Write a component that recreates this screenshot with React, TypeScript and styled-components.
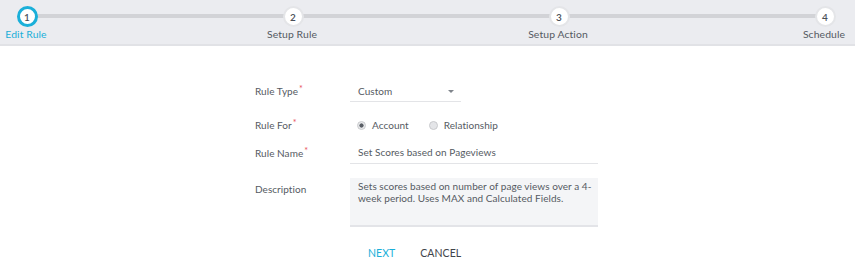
import * as React from 'react';
import styled, { createGlobalStyle } from 'styled-components';

const GlobalStyle = createGlobalStyle`
  body {
    margin: 0;
    background: #ffffff;
    font-family: Lato, "Open Sans", Arial, sans-serif;
  }
`;

const CYAN = '#1aafd9';

const steps = ['Edit Rule', 'Setup Rule', 'Setup Action', 'Schedule'];

export default () => (
  <>
    <GlobalStyle />
    <Header>
      <Track>
        {steps.map((label, i) => (
          <React.Fragment key={label}>
            {i > 0 && <Connector />}
            <Step>
              <Circle $active={i === 0}>{i + 1}</Circle>
              <StepLabel $active={i === 0}>{label}</StepLabel>
            </Step>
          </React.Fragment>
        ))}
      </Track>
    </Header>
    <Form>
      <Row $top={34}>
        <Label>
          Rule Type<Req>*</Req>
        </Label>
        <Select>
          <span>Custom</span>
          <Caret />
        </Select>
      </Row>
      <Row $top={15}>
        <Label $line={16}>
          Rule For<Req>*</Req>
        </Label>
        <Radios>
          <RadioItem>
            <RadioDot $checked />
            Account
          </RadioItem>
          <RadioItem>
            <RadioDot />
            Relationship
          </RadioItem>
        </Radios>
      </Row>
      <Row $top={9}>
        <Label>
          Rule Name<Req>*</Req>
        </Label>
        <TextField $width={248}>Set Scores based on Pageviews</TextField>
      </Row>
      <Row $top={14}>
        <Label>Description</Label>
        <TextArea>
          Sets scores based on number of page views over a 4-week period. Uses MAX and Calculated
          Fields.
        </TextArea>
      </Row>
      <Actions>
        <ActionButton $primary>NEXT</ActionButton>
        <ActionButton>CANCEL</ActionButton>
      </Actions>
    </Form>
  </>
);

const Header = styled.div`
  height: 44px;
  background: #ebecf0;
  border-bottom: 2px solid #e1e2e6;
  box-sizing: content-box;
`;

const Track = styled.div`
  display: flex;
  padding: 6px 30px 0 27px;
`;

const Step = styled.div`
  width: 0;
  display: flex;
  flex-direction: column;
  align-items: center;
`;

const Connector = styled.div`
  flex: 1;
  height: 4px;
  margin-top: 8px;
  background: #d2d3d7;
`;

const Circle = styled.div<{ $active?: boolean }>`
  position: relative;
  z-index: 1;
  flex: none;
  width: 21px;
  height: 21px;
  box-sizing: border-box;
  border-radius: 50%;
  background: #ffffff;
  border: ${p => (p.$active ? `3px solid ${CYAN}` : '2px solid #e4e5e8')};
  display: flex;
  align-items: center;
  justify-content: center;
  font-size: 10px;
  font-weight: 600;
  color: #4a4f57;
`;

const StepLabel = styled.div<{ $active?: boolean }>`
  margin-top: 1px;
  margin-left: -2px;
  white-space: nowrap;
  font-size: 10.4px;
  line-height: 13px;
  letter-spacing: 0.1px;
  color: ${p => (p.$active ? CYAN : '#555a62')};
`;

const Form = styled.div`
  width: 343px;
  margin: 0 auto;
  transform: translateX(-1px);
  color: #555a62;
  font-size: 10px;
  letter-spacing: 0.05px;
`;

const Row = styled.div<{ $top: number }>`
  display: grid;
  grid-template-columns: 95px 248px;
  align-items: start;
  margin-top: ${p => p.$top}px;
`;

const Label = styled.div<{ $line?: number }>`
  height: ${p => p.$line ?? 22}px;
  line-height: ${p => p.$line ?? 22}px;
`;

const Req = styled.span`
  color: #e8505b;
  font-size: 9px;
  line-height: 0;
  vertical-align: 3px;
  margin-left: 1px;
`;

const Select = styled.div`
  width: 111px;
  height: 22px;
  box-sizing: border-box;
  padding: 0 7px 0 8px;
  border-bottom: 1px solid #e3e4e7;
  display: flex;
  align-items: center;
  justify-content: space-between;
`;

const Caret = styled.span`
  width: 0;
  height: 0;
  border-left: 3px solid transparent;
  border-right: 3px solid transparent;
  border-top: 3px solid #80858c;
  margin-top: 2px;
`;

const Radios = styled.div`
  display: flex;
  gap: 20px;
  padding-left: 7px;
  height: 16px;
  align-items: center;
`;

const RadioItem = styled.label`
  display: flex;
  align-items: center;
  gap: 6px;
`;

const RadioDot = styled.span<{ $checked?: boolean }>`
  width: 9px;
  height: 9px;
  box-sizing: border-box;
  border-radius: 50%;
  border: 1px solid #c9cacd;
  background: ${p => (p.$checked ? 'radial-gradient(circle, #5a5f66 0 1.8px, #e8e9eb 2.4px)' : '#e4e5e8')};
`;

const TextField = styled.div<{ $width: number }>`
  width: ${p => p.$width}px;
  height: 22px;
  box-sizing: border-box;
  padding: 0 8px;
  line-height: 21px;
  border-bottom: 1px solid #e3e4e7;
`;

const TextArea = styled.div`
  width: 248px;
  height: 49px;
  box-sizing: border-box;
  padding: 2px 2px 0 8px;
  line-height: 12px;
  background: #f4f5f7;
  border-bottom: 2px solid #e3e4e8;
`;

const Actions = styled.div`
  display: flex;
  gap: 25px;
  margin-top: 16px;
  padding-left: 113px;
`;

const ActionButton = styled.div<{ $primary?: boolean }>`
  height: 20px;
  line-height: 20px;
  font-size: 10.5px;
  color: ${p => (p.$primary ? CYAN : '#3f444b')};
`;
